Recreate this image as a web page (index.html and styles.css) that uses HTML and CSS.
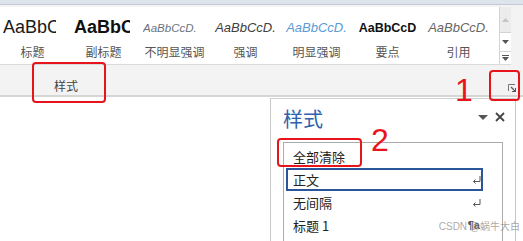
FILE: index.html
```html
<!DOCTYPE html>
<html lang="zh-CN">
<head>
<meta charset="utf-8">
<title>样式</title>
<link rel="stylesheet" href="styles.css">
</head>
<body>
<div class="topband"></div>
<div class="ribbon">
  <div class="gallery">
    <div class="items">
      <div class="item first"><div class="sample s1">AaBbCcD</div><div class="label">标题</div></div>
      <div class="item"><div class="sample s2">AaBbCcD</div><div class="label">副标题</div></div>
      <div class="item"><div class="sample s3">AaBbCcD.</div><div class="label">不明显强调</div></div>
      <div class="item"><div class="sample s4">AaBbCcD.</div><div class="label">强调</div></div>
      <div class="item"><div class="sample s5">AaBbCcD.</div><div class="label">明显强调</div></div>
      <div class="item"><div class="sample s6">AaBbCcD</div><div class="label">要点</div></div>
      <div class="item"><div class="sample s7">AaBbCcD.</div><div class="label">引用</div></div>
    </div>
    <div class="scroll">
      <div class="sb up"><svg width="7" height="4" viewBox="0 0 7 4"><path d="M0 4 L3.5 0 L7 4 Z" fill="#c4c4c4"/></svg></div>
      <div class="sb down"><svg width="7" height="4" viewBox="0 0 7 4"><path d="M0 0 L7 0 L3.5 4 Z" fill="#555"/></svg></div>
      <div class="sb more"><svg width="7" height="6" viewBox="0 0 7 6"><path d="M0 0.5 H7" stroke="#555" stroke-width="1"/><path d="M0 2 L7 2 L3.5 6 Z" fill="#555"/></svg></div>
    </div>
  </div>
  <div class="groupbar">
    <span class="grouplabel">样式</span>
    <span class="launcher"><svg width="8" height="8" viewBox="0 0 8 8"><path d="M0.5 7 V0.5 H7" fill="none" stroke="#777" stroke-width="1"/><path d="M3 3 L7 7 M7.5 4 V7.5 H4" fill="none" stroke="#555" stroke-width="1.2"/></svg></span>
  </div>
</div>
<div class="workspace">
  <div class="pane">
    <div class="pane-head">
      <span class="pane-title">样式</span>
      <span class="pane-ctrls">
        <svg class="drop" width="10" height="5" viewBox="0 0 10 5"><path d="M0 0 H10 L5 5 Z" fill="#555"/></svg>
        <svg class="close" width="10" height="10" viewBox="0 0 10 10"><path d="M1 1 L9 9 M9 1 L1 9" stroke="#444" stroke-width="1.8"/></svg>
      </span>
    </div>
    <div class="list">
      <div class="row">全部清除</div>
      <div class="row sel">正文<span class="mark"><svg width="9" height="8" viewBox="0 0 9 8"><path d="M8 0 V5.5 H1.5" fill="none" stroke="#555" stroke-width="1"/><path d="M3.5 3.5 L1.5 5.5 L3.5 7.5" fill="none" stroke="#555" stroke-width="1"/></svg></span></div>
      <div class="row">无间隔<span class="mark"><svg width="9" height="8" viewBox="0 0 9 8"><path d="M8 0 V5.5 H1.5" fill="none" stroke="#555" stroke-width="1"/><path d="M3.5 3.5 L1.5 5.5 L3.5 7.5" fill="none" stroke="#555" stroke-width="1"/></svg></span></div>
      <div class="row">标题 1<span class="mark para">¶a</span></div>
    </div>
  </div>
</div>
<div class="note box-a"></div>
<div class="note box-b"></div>
<div class="note box-c"></div>
<div class="num num-1">1</div>
<div class="num num-2">2</div>
<div class="watermark">CSDN @蜗牛大白</div>
</body>
</html>
```
FILE: styles.css
```css
* { box-sizing: border-box; }
html, body { margin: 0; padding: 0; }
body {
  width: 523px;
  height: 241px;
  overflow: hidden;
  background: #fff;
  position: relative;
  font-family: "Noto Sans CJK SC", "Noto Sans", sans-serif;
  color: #222;
}
.topband {
  height: 5px;
  background: #dce4ec;
  border-bottom: 1px solid #c3cad2;
}
.ribbon {
  background: #f3f3f3;
  padding-top: 2px;
  border-bottom: 2px solid #d6d6d6;
}
.gallery {
  display: flex;
  width: 511px;
  height: 58px;
  background: #fff;
  border-bottom: 1px solid #dadada;
}
.items {
  flex: 1;
  display: flex;
  overflow: hidden;
}
.item {
  flex: 0 0 71px;
  width: 71px;
}
.item.first { margin-left: -3px; }
.sample {
  height: 30px;
  margin: 5px 3px 0 3px;
  white-space: nowrap;
  overflow: hidden;
  text-align: center;
  font-family: "Liberation Sans", Arial, sans-serif;
  line-height: 32px;
  font-size: 13px;
}
.s1 { font-size: 18px; color: #1a1a1a; line-height: 30px; margin: 5px 12px 0 6px; }
.s2 { font-size: 18px; font-weight: bold; color: #111; line-height: 30px; margin: 5px 9px 0 6px; }
.s3 { font-size: 11.5px; font-style: italic; color: #6a7280; text-align: left; margin: 5px 14px 0 4px; }
.s4 { font-style: italic; color: #404040; }
.s5 { font-style: italic; color: #5b9bd5; }
.s6 { font-weight: bold; color: #111; font-size: 12.5px; }
.s7 { font-style: italic; color: #666; }
.label {
  font-size: 12px;
  line-height: 20px;
  color: #555;
  text-align: center;
  white-space: nowrap;
}
.scroll {
  width: 12px;
  border-left: 1px solid #d3d3d3;
  display: flex;
  flex-direction: column;
}
.sb {
  display: flex;
  align-items: center;
  justify-content: center;
  border-bottom: 1px solid #d3d3d3;
}
.sb.up { height: 26px; background: #ececec; }
.sb.down { height: 19px; }
.sb.more { flex: 1; border-bottom: none; }
.groupbar {
  height: 30px;
  display: flex;
  align-items: flex-start;
  padding-top: 13px;
}
.grouplabel {
  margin-left: 54px;
  font-size: 12px;
  line-height: 16px;
  color: #444;
}
.launcher {
  margin-left: auto;
  margin-right: 7px;
  margin-top: 6px;
  width: 8px;
  height: 8px;
  display: flex;
}
.workspace { height: 144px; }
.pane {
  margin: 1px 0 0 270px;
  width: 246px;
  height: 150px;
  border-left: 1px solid #c8c8c8;
  border-right: 1px solid #c8c8c8;
  border-top: 1px solid #d0d0d0;
}
.pane-head {
  height: 43px;
  display: flex;
  align-items: flex-start;
}
.pane-title {
  margin: 7px 0 0 12px;
  font-size: 20px;
  line-height: 26px;
  color: #2f62ad;
}
.pane-ctrls {
  margin-left: auto;
  margin-right: 10px;
  margin-top: 13px;
  display: flex;
  align-items: center;
  gap: 7px;
}
.list {
  margin-left: 12px;
  width: 220px;
  height: 110px;
  border: 1px solid #ababab;
  border-bottom: none;
  padding-top: 2px;
}
.row {
  margin-left: 2px;
  width: 197px;
  height: 23px;
  border: 2px solid transparent;
  padding-left: 5px;
  display: flex;
  align-items: center;
  font-size: 13px;
  line-height: 19px;
  color: #222;
}
.row.sel { border-color: #2b579a; }
.mark {
  margin-left: auto;
  display: flex;
  align-items: center;
}
.mark.para {
  font-family: "Liberation Sans", Arial, sans-serif;
  font-size: 11px;
  font-weight: bold;
  color: #555;
  margin-right: 1px;
}
.note {
  position: absolute;
  border: 2px solid #e8141c;
  border-radius: 4px;
}
.box-a { left: 32px; top: 62px; width: 74px; height: 41px; }
.box-b { left: 489px; top: 70px; width: 31px; height: 31px; }
.box-c { left: 277px; top: 138px; width: 85px; height: 29px; }
.num {
  position: absolute;
  font-family: "Liberation Sans", Arial, sans-serif;
  font-size: 32px;
  line-height: 32px;
  color: #e8141c;
}
.num-1 { left: 455px; top: 74px; }
.num-2 { left: 371px; top: 124px; }
.watermark {
  position: absolute;
  right: 3px;
  top: 220px;
  font-size: 10px;
  line-height: 14px;
  color: rgba(140, 140, 140, 0.75);
  font-family: "Liberation Sans", "Noto Sans CJK SC", sans-serif;
  white-space: nowrap;
}
```
